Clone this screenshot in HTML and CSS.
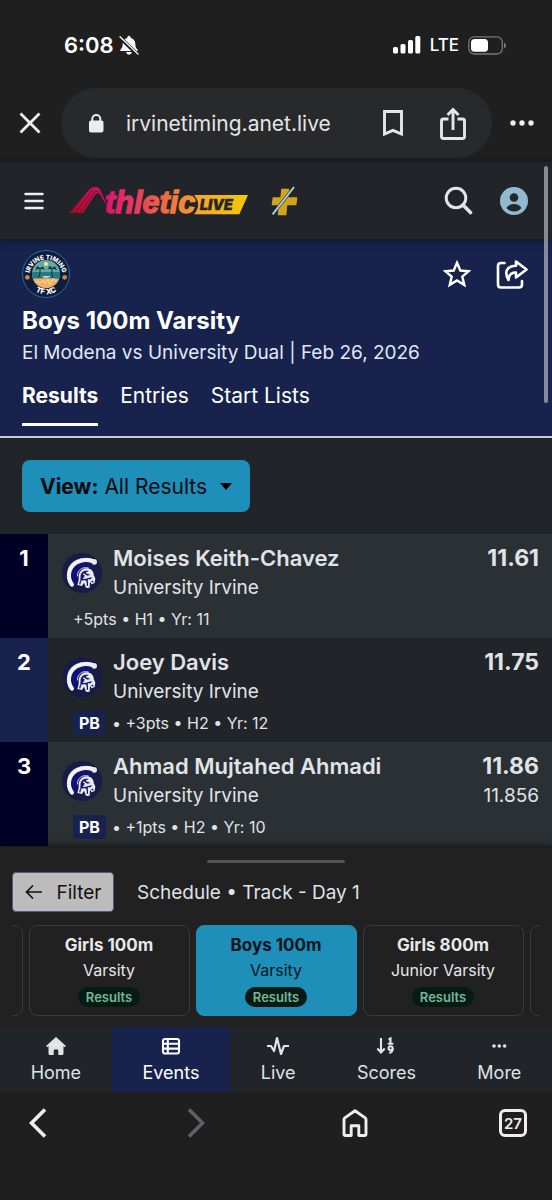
FILE: index.html
```html
<!DOCTYPE html>
<html lang="en">
<head>
<meta charset="utf-8">
<meta name="viewport" content="width=device-width, initial-scale=1">
<title>Boys 100m Varsity - AthleticLIVE</title>
<link rel="stylesheet" href="styles.css">
</head>
<body>
<svg class="defs" width="0" height="0" aria-hidden="true">
  <symbol id="trojan" viewBox="0 0 120 120">
    <circle cx="60" cy="60" r="60" fill="#191b47"/>
    <path d="M30 95C16 76 17 44 42 29C58 19 78 18 98 26" fill="none" stroke="#b9bace" stroke-width="13"/>
    <path d="M30 95C16 76 17 44 42 29C58 19 78 18 98 26" fill="none" stroke="#f4f4fa" stroke-width="12" stroke-linecap="round" stroke-dasharray="1 9"/>
    <circle cx="97" cy="27" r="8" fill="#e8e8f1"/>
    <path d="M38 93C20 72 28 47 50 36C66 29 82 33 92 37L88 46C70 38 52 48 48 62Q45 76 50 90Z" fill="#10127c"/>
    <path d="M46 70C46 52 60 40 80 45" fill="none" stroke="#c9cadd" stroke-width="3"/>
    <path d="M50 66C54 50 66 44 78 46C90 49 95 57 95 65L100 77L98 90L89 94L84 86L83 104L72 105L66 89L60 99L46 96L50 82Z" fill="#e6e6f0"/>
    <path d="M56 66C60 54 68 51 80 54L70 60L86 66L68 69L62 78L72 77L90 72L86 79L78 79L76 87L69 81L55 84Z" fill="#15176c"/>
    <path d="M64 62L74 70M84 56L90 66" fill="none" stroke="#f3f3fa" stroke-width="4"/>
    <path d="M76 84V98M89 84L94 88M56 84L53 94" fill="none" stroke="#20225e" stroke-width="4"/>
  </symbol>
</svg>

<div class="screen">
  <div class="status">
    <div class="status-time"><span>6:08</span>
      <svg width="20" height="20" viewBox="0 0 60 60" aria-hidden="true"><path d="M30 2q5 0 5 6q13 4 14 18c0 11 3 14 7 18q2 4-2 4H6q-4 0-2-4c5-5 7-9 7-18Q12 12 25 8q0-6 5-6zM21 51h18q-2 8-9 8t-9-8z" fill="#f7f7f7"/><path d="M2 7L56 59" stroke="#1f1f1f" stroke-width="11"/><path d="M3 5L57 57" stroke="#f7f7f7" stroke-width="4" stroke-linecap="round"/></svg>
    </div>
    <div class="status-signal">
      <svg width="28" height="18" viewBox="0 0 28 18" fill="#fff" aria-hidden="true"><rect y="11" width="5" height="6.500" rx="1.500"/><rect x="7.500" y="8" width="5" height="9.500" rx="1.500"/><rect x="15" y="4" width="5" height="13.500" rx="1.500"/><rect x="22.300" y="0" width="5" height="17.500" rx="1.500"/></svg>
      <span>LTE</span>
      <svg width="38" height="19" viewBox="0 0 38 19" aria-hidden="true"><rect x=".8" y=".8" width="33.500" height="17.200" rx="5.500" fill="none" stroke="#77787a" stroke-width="1.300"/><rect x="3" y="3" width="17" height="12.800" rx="3.500" fill="#fff"/><path d="M36 6.500q2 .8 2 3t-2 3z" fill="#77787a"/></svg>
    </div>
  </div>

  <div class="browser-bar">
    <button class="icon-btn" aria-label="Close"><svg width="22" height="22" viewBox="0 0 22 22"><path d="M1.500 1.500l19 19M20.500 1.500l-19 19" stroke="#eee" stroke-width="2.800"/></svg></button>
    <div class="address">
      <svg width="15" height="19" viewBox="0 0 15 19" aria-hidden="true"><rect y="6.500" width="14.500" height="12" rx="2" fill="#ececee"/><path d="M3.300 8V5a4 4 0 0 1 8 0v3" fill="none" stroke="#ececee" stroke-width="2"/></svg>
      <span class="host">irvinetiming.anet.live</span>
      <button class="icon-btn" aria-label="Bookmark"><svg width="20" height="26" viewBox="0 0 20 26"><path d="M1.500 1.500h17v22.500L10 20.300l-8.500 3.700z" fill="none" stroke="#e6e6e8" stroke-width="2.900"/></svg></button>
      <button class="icon-btn share-btn" aria-label="Share"><svg width="26" height="33" viewBox="0 0 26 33"><path d="M8.500 12H3.500Q1.500 12 1.500 14v15.500q0 2 2 2h19q2 0 2-2V14q0-2-2-2h-5M13 23V3M7.500 8L13 2.500 18.500 8" fill="none" stroke="#e6e6e8" stroke-width="2.900"/></svg></button>
    </div>
    <button class="icon-btn" aria-label="Browser menu"><svg width="24" height="6" viewBox="0 0 24 6" fill="#eee"><circle cx="3" cy="3" r="2.700"/><circle cx="12" cy="3" r="2.700"/><circle cx="21" cy="3" r="2.700"/></svg></button>
  </div>

  <div class="page">
    <div class="scroll-thumb"></div>
    <header class="app-bar">
      <button class="icon-btn" aria-label="Menu"><svg width="20" height="18" viewBox="0 0 20 18"><path d="M1.500 2h17M1.500 9h17M1.500 16h17" stroke="#eceff2" stroke-width="2.500" stroke-linecap="round"/></svg></button>
      <a class="brand" href="#" aria-label="AthleticLIVE">
        <svg width="180" height="40" viewBox="208 48 540 120">
          <defs>
            <linearGradient id="word" gradientUnits="userSpaceOnUse" x1="320" y1="0" x2="590" y2="0"><stop offset="0" stop-color="#d8166f"/><stop offset=".4" stop-color="#e6455a"/><stop offset="1" stop-color="#f3a02c"/></linearGradient>
            <linearGradient id="hill" gradientUnits="userSpaceOnUse" x1="215" y1="145" x2="310" y2="75"><stop offset="0" stop-color="#a80d22"/><stop offset="1" stop-color="#cb1264"/></linearGradient>
            <linearGradient id="tag" x1="0" x2="1"><stop offset="0" stop-color="#f3a52b"/><stop offset="1" stop-color="#f5c60b"/></linearGradient>
          </defs>
          <path d="M210 144L268 74Q276 65 288 65Q296 65 301 73L323 122Q310 108 303 91Q296 80 287 88L250 144Z" fill="url(#hill)"/>
          <path d="M226 144L279 75M240 144L286 80Q294 75 300 83" fill="none" stroke="#6b0c2c" stroke-width="2.500"/>
          <path d="M583 90H745L719 148H583Q608 119 583 90Z" fill="url(#tag)"/>
          <text class="brand-word" x="316" y="143" fill="url(#word)" stroke="url(#word)">thletic</text>
          <text class="brand-live" x="600" y="136">LIVE</text>
        </svg>
      </a>
      <svg class="plus" width="27" height="30" viewBox="0 0 81 90" aria-hidden="true"><path d="M31 8H55L52 34H79L76 58H49L46 88H20L23 58H2L5 34H28Z" fill="#d2a31c"/><path d="M69 3L5 85" stroke="#25292c" stroke-width="9"/><path d="M69 3L5 85" stroke="#a8cddd" stroke-width="6"/></svg>
      <div class="app-actions">
        <button class="icon-btn" aria-label="Search"><svg width="29" height="29" viewBox="0 0 29 29"><circle cx="12" cy="12" r="9.800" fill="none" stroke="#e2e5e8" stroke-width="3"/><path d="M19 19l7.500 7.500" stroke="#e2e5e8" stroke-width="3.600" stroke-linecap="round"/></svg></button>
        <button class="icon-btn" aria-label="Account"><svg width="28" height="28" viewBox="0 0 28 28"><circle cx="14" cy="14" r="14" fill="#91bad1"/><circle cx="14" cy="10.500" r="4.300" fill="#20282e"/><path d="M6.500 21q2.500-4 7.500-4t7.500 4q-3 3.500-7.500 3.500T6.500 21z" fill="#20282e"/></svg></button>
      </div>
    </header>

    <section class="event">
      <div class="event-top">
        <svg width="48" height="48" viewBox="0 0 144 144" role="img" aria-label="Irvine Timing TF XC">
          <defs><path id="arc-top" d="M22 78A50 50 0 1 1 122 78"/><path id="arc-bottom" d="M11 72A61 61 0 0 0 133 72"/><clipPath id="disc"><circle cx="72" cy="72" r="42"/></clipPath></defs>
          <circle cx="72" cy="72" r="70.500" fill="#101c3c" stroke="#206fa2" stroke-width="3"/>
          <g clip-path="url(#disc)"><rect x="28" y="28" width="88" height="90" fill="#63aaa3"/><rect x="28" y="66" width="88" height="20" fill="#247b87"/><path d="M28 87Q72 82 116 87V116H28Z" fill="#f4ac63"/><circle cx="72" cy="42" r="6" fill="#f7e4a5"/><path d="M60 78h26l-8 5H66z" fill="#e7d5a0"/>
          <path d="M50 83Q56 68 54 54M92 83Q87 68 90 54" fill="none" stroke="#102b3b" stroke-width="3"/><path d="M39 62Q43 50 54 55Q64 47 68 60Q60 55 54 57Q48 55 39 62ZM40 51Q50 47 54 55Q60 47 67 52Q58 52 54 57ZM76 60Q80 48 90 55Q100 47 105 61Q97 55 90 57Q82 54 76 60ZM78 50Q87 46 90 55Q96 46 104 51Q95 52 90 57Z" fill="#102b3b"/><path d="M42 97q6-6 9 0t8-2 7 2 8-3 7 3 8-2 10 0" fill="none" stroke="#fbe1b6" stroke-width="3"/></g>
          <circle cx="16" cy="82" r="7" fill="#e17e3d"/><circle cx="128" cy="82" r="7" fill="#e17e3d"/>
          <text class="badge-text"><textPath href="#arc-top" startOffset="50%">IRVINE TIMING</textPath></text>
          <text class="badge-text badge-foot"><textPath href="#arc-bottom" startOffset="50%">TF XC</textPath></text>
        </svg>
        <div class="event-actions">
          <button class="icon-btn" aria-label="Favorite"><svg width="28" height="28" viewBox="0 0 28 28"><path d="M14 2.800l3.300 7.700 8.400.7-6.400 5.400 2 8.300L14 20.500l-7.300 4.400 2-8.300-6.400-5.400 8.400-.7z" fill="none" stroke="#fff" stroke-width="2.400"/></svg></button>
          <button class="icon-btn" aria-label="Share event"><svg width="32" height="30" viewBox="0 0 32 30" fill="none" stroke="#fff" stroke-width="2.600" stroke-linejoin="round" stroke-linecap="round"><path d="M8.500 4H5Q2 4 2 7v18.500q0 3 3 3h18q3 0 3-3V22"/><path d="M20 2.500l10.500 8L20 18.500v-5q-7-.3-7.500 7.500Q9 15 11 11q2.500-4.300 9-4.300z"/></svg></button>
        </div>
      </div>
      <h1>Boys 100m Varsity</h1>
      <p class="meet">El Modena vs University Dual | Feb 26, 2026</p>
      <nav class="tabs"><a class="active" href="#">Results</a><a href="#">Entries</a><a href="#">Start Lists</a></nav>
    </section>

    <main>
      <button class="view-btn"><span><b>View:</b> All Results</span><svg width="12" height="7" viewBox="0 0 12 7" aria-hidden="true"><path d="M0 0h12L6 7z"/></svg></button>
      <ol class="results">
        <li><span class="rank">1</span>
          <div class="athlete"><div class="who"><svg class="crest" width="40" height="40"><use href="#trojan"/></svg><div><h2>Moises Keith-Chavez</h2><p>University Irvine</p></div></div>
          <div class="meta">+5pts • H1 • Yr: 11</div></div>
          <div class="mark"><b>11.61</b></div></li>
        <li><span class="rank">2</span>
          <div class="athlete"><div class="who"><svg class="crest" width="40" height="40"><use href="#trojan"/></svg><div><h2>Joey Davis</h2><p>University Irvine</p></div></div>
          <div class="meta"><span class="pb">PB</span>• +3pts • H2 • Yr: 12</div></div>
          <div class="mark"><b>11.75</b></div></li>
        <li><span class="rank">3</span>
          <div class="athlete"><div class="who"><svg class="crest" width="40" height="40"><use href="#trojan"/></svg><div><h2>Ahmad Mujtahed Ahmadi</h2><p>University Irvine</p></div></div>
          <div class="meta"><span class="pb">PB</span>• +1pts • H2 • Yr: 10</div></div>
          <div class="mark"><b>11.86</b><span>11.856</span></div></li>
      </ol>
    </main>

    <section class="schedule">
      <div class="handle"></div>
      <div class="schedule-head">
        <button class="filter"><svg width="18" height="16" viewBox="0 0 18 16" aria-hidden="true"><path d="M17 8H2M8 1.500L1.500 8 8 14.500" fill="none" stroke="#111" stroke-width="1.700"/></svg>Filter</button>
        <span>Schedule • Track - Day 1</span>
      </div>
      <div class="cards">
        <div class="card"></div>
        <a class="card" href="#"><b>Girls 100m</b><span>Varsity</span><em>Results</em></a>
        <a class="card current" href="#"><b>Boys 100m</b><span>Varsity</span><em>Results</em></a>
        <a class="card" href="#"><b>Girls 800m</b><span>Junior Varsity</span><em>Results</em></a>
        <div class="card"></div>
      </div>
    </section>

    <nav class="app-nav">
      <a href="#"><svg width="20" height="20" viewBox="0 0 20 20" fill="#e2e5e8"><path d="M10 1L0 10l1.300 1.200L2.500 10v7.500q0 1.500 1.500 1.500h3.700v-4.500q0-1 1-1h2.600q1 0 1 1V19H16q1.500 0 1.500-1.500V10l1.200 1.200L20 10z"/></svg>Home</a>
      <a class="active" href="#"><svg width="20" height="20" viewBox="0 0 20 20" fill="none" stroke="#fff" stroke-width="2.100"><rect x="2" y="3" width="16" height="14.500" rx="2"/><path d="M2 7.700h16M2 12.600h16M6.800 3v14.500"/></svg>Events</a>
      <a href="#"><svg width="24" height="20" viewBox="0 0 24 20" fill="none" stroke="#e2e5e8" stroke-width="2.200" stroke-linejoin="round"><path d="M1 10h4l3 5 3-13 4 16 3-8h5"/></svg>Live</a>
      <a href="#"><svg width="20" height="20" viewBox="0 0 20 20" fill="none" stroke="#e2e5e8" stroke-width="2.100"><path d="M5 2v14M1.300 12.500L5 16.500l3.700-4M12.500 3.500l2-1v5M11.800 7.700h5.500"/><circle cx="14.600" cy="12.300" r="2"/><path d="M16.800 12.300q0 4-3.500 4.700"/></svg>Scores</a>
      <a href="#"><svg width="20" height="20" viewBox="0 0 20 20" fill="#e2e5e8"><circle cx="5" cy="10" r="1.800"/><circle cx="10.300" cy="10" r="1.800"/><circle cx="15.600" cy="10" r="1.800"/></svg>More</a>
    </nav>
  </div>

  <div class="browser-nav">
    <button class="icon-btn" aria-label="Back"><svg width="18" height="30" viewBox="0 0 18 30"><path d="M16 1.500L2.500 15 16 28.500" fill="none" stroke="#eee" stroke-width="3.600"/></svg></button>
    <button class="icon-btn" aria-label="Forward"><svg width="18" height="30" viewBox="0 0 18 30"><path d="M2 1.500L15.500 15 2 28.500" fill="none" stroke="#606164" stroke-width="3.600"/></svg></button>
    <button class="icon-btn" aria-label="Browser home"><svg width="26" height="28" viewBox="0 0 26 28"><path d="M3.500 26.500q-1.500 0-1.500-1.500V10.500q0-1 .8-1.600L13 1.700l10.200 7.200q.8.600.8 1.600V25q0 1.500-1.500 1.500h-5.700v-9.700H9.200v9.700z" fill="none" stroke="#eee" stroke-width="2.900" stroke-linejoin="round"/></svg></button>
    <button class="icon-btn" aria-label="27 open tabs"><span class="tab-count">27</span></button>
  </div>
</div>
</body>
</html>
```

FILE: styles.css
```css
* { box-sizing: border-box; }
body {
  margin: 0;
  background: #1f1f1f;
  color: #dfe2e6;
  font-family: Inter, "Liberation Sans", sans-serif;
  font-size: 19px;
}
h1, h2, p, ol { margin: 0; padding: 0; }
a { color: inherit; text-decoration: none; }
button { font: inherit; color: inherit; border: 0; padding: 0; background: none; cursor: pointer; }
svg { display: block; flex: none; }
.defs { position: absolute; }
.screen { min-height: 100vh; display: flex; flex-direction: column; }
.icon-btn { display: grid; place-items: center; min-width: 32px; min-height: 40px; }

/* phone status bar */
.status { display: flex; justify-content: space-between; align-items: center; height: 88px; padding: 2px 46px 0 64px; color: #fff; }
.status-time, .status-signal { display: flex; align-items: center; }
.status-time { gap: 5px; font-size: 22px; font-weight: 600; }
.status-signal { gap: 9px; font-size: 17px; font-weight: 500; }

/* browser address bar */
.browser-bar { display: flex; align-items: center; justify-content: space-between; padding: 0 14px 4px; }
.address { display: flex; align-items: center; flex: 1; height: 70px; margin: 0 14px 0 15px; padding: 0 23px 0 28px; border-radius: 35px; background: #28292b; color: #e4e4e6; }
.host { flex: 1; margin-left: 22px; font-size: 21px; }
.share-btn { margin-left: 28px; }

.page { position: relative; display: flex; flex-direction: column; flex: 1; background: #212529; }
.scroll-thumb { position: absolute; z-index: 3; top: 4px; right: 4px; width: 4px; height: 237px; border-radius: 2px; background: rgba(180, 182, 186, 0.7); }

/* app header */
.app-bar { position: relative; z-index: 1; display: flex; align-items: center; height: 77px; padding: 0 22px 0 18px; background: #212529; box-shadow: 0 2px 8px rgba(0, 0, 0, 0.4); }
.brand { margin-left: 19px; }
.brand-word { font: italic 700 92px "Liberation Sans", sans-serif; stroke-width: 4px; }
.brand-live { font: italic 900 44px Inter, sans-serif; fill: #24272a; stroke: #24272a; stroke-width: 1px; }
.plus { margin-left: 22px; }
.app-actions { display: flex; gap: 24px; margin-left: auto; }

/* event heading */
.event { padding: 11px 24px 10px 22px; border-bottom: 2px solid #c9cbd6; background: #17234d; color: #fff; }
.event-top, .event-actions { display: flex; align-items: center; }
.event-top { justify-content: space-between; margin-bottom: 7px; }
.event-actions { gap: 23px; }
.badge-text { font: 800 19px Inter, sans-serif; fill: #fff; text-anchor: middle; }
.badge-foot { font-size: 23px; }
h1 { font-size: 24px; line-height: 32px; font-weight: 700; }
.meet { color: #e3e8f5; line-height: 32px; }
.tabs { display: flex; gap: 22px; margin-top: 13px; font-size: 21px; line-height: 28px; }
.tabs a { padding-bottom: 13px; border-bottom: 3px solid transparent; }
.tabs .active { border-color: #fff; font-weight: 700; }

/* results */
main { flex: 1; }
.view-btn { display: flex; align-items: center; gap: 13px; height: 52px; margin: 22px; padding: 0 18px; border-radius: 8px; background: #1e8fb9; color: #050a10; font-size: 21px; }
.results { list-style: none; }
.results li { display: grid; grid-template-columns: 48px 1fr auto; min-height: 104px; color: #e0e3e7; }
.results li:nth-child(odd) { background: #2b3034; }
.rank { padding-top: 9px; background: #17234d; color: #fff; font-size: 22px; line-height: 30px; font-weight: 700; text-align: center; }
li:nth-child(odd) .rank { background: #000026; }
.athlete { padding: 9px 0 3px 14px; }
.who { display: flex; align-items: center; gap: 11px; line-height: 30px; }
h2 { font-size: 22px; line-height: 30px; font-weight: 600; }
.meta { display: flex; align-items: center; gap: 6px; padding-left: 11px; font-size: 16px; line-height: 32px; }
.pb { padding: 0 6px; border-radius: 4px; background: #17234d; color: #fff; font-weight: 700; line-height: 24px; }
.mark { display: flex; flex-direction: column; align-items: flex-end; padding: 9px 13px 0 0; line-height: 30px; }
.mark b { font-size: 23px; font-weight: 700; }

/* schedule drawer */
.schedule { position: relative; padding: 13px 12px 11px; background: #212121; box-shadow: 0 0 8px rgba(0, 0, 0, 0.6); }
.handle { width: 138px; height: 3px; margin: 0 auto 9px; border-radius: 2px; background: #555; }
.schedule-head { display: flex; align-items: center; gap: 23px; margin-bottom: 13px; }
.filter { display: flex; align-items: center; justify-content: center; gap: 14px; width: 102px; height: 40px; border: 1px solid #4e5a80; border-radius: 4px; background: #bcbcbc; color: #111; }
.cards { display: flex; justify-content: center; gap: 6px; overflow: hidden; }
.card { display: flex; flex: none; flex-direction: column; align-items: center; width: 161px; min-height: 91px; padding-top: 7px; border: 1px solid #3a3a3b; border-radius: 8px; color: #e8e8ea; font-size: 16px; line-height: 25px; }
.card b { font-size: 17px; }
.card em { margin-top: 4px; padding: 0 8px; border-radius: 10px; background: #051b13; color: #75b798; font-size: 13px; line-height: 20px; font-style: normal; font-weight: 600; }
.current { border-color: #1e8fb9; background: #1e8fb9; color: #06131c; }

/* app navigation */
.app-nav { position: relative; display: flex; background: #212529; }
.app-nav a { display: flex; flex: 1 1 auto; flex-direction: column; align-items: center; gap: 4px; padding: 9px 0 7px; font-size: 18px; line-height: 25px; }
.app-nav .active { background: #17234d; color: #fff; }

/* browser toolbar */
.browser-nav { display: flex; justify-content: space-between; align-items: flex-start; height: 108px; padding: 11px 23px 0 22px; }
.tab-count { display: grid; place-items: center; width: 28px; height: 28px; border: 3px solid #eee; border-radius: 6px; color: #eee; font-size: 15px; font-weight: 600; }
```
